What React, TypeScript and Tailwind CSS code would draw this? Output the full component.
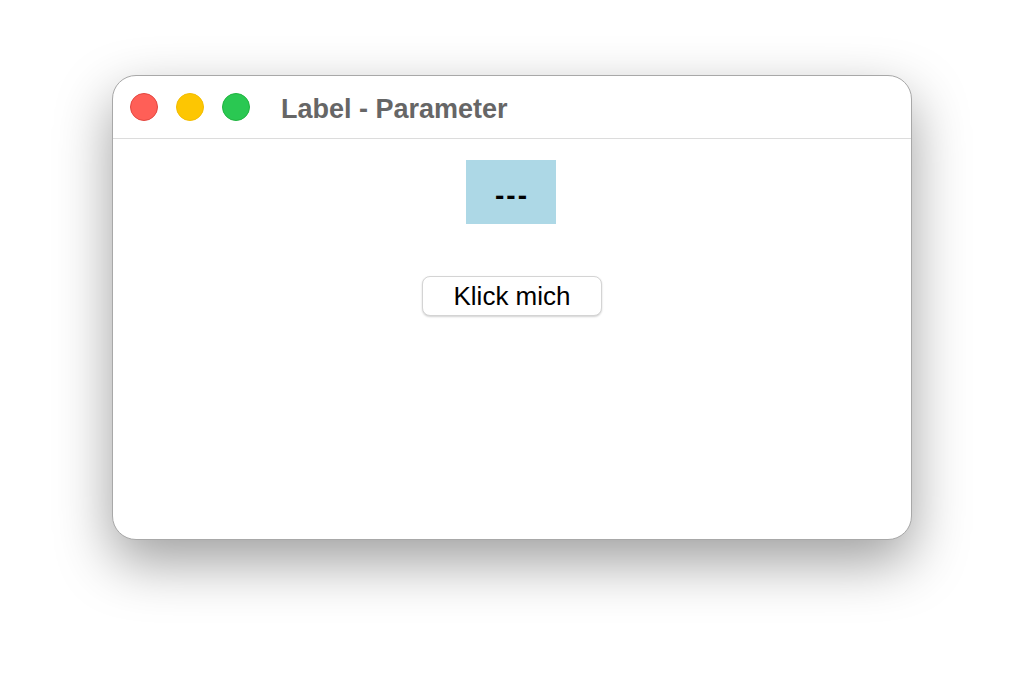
import React from "react";

export default function App() {
  return (
    <div className="w-[1024px] h-[688px] bg-white pt-[75px] pl-[112px]" style={{ fontFamily: '"Liberation Sans", Arial, sans-serif' }}>
      <div className="w-[800px] h-[465px] bg-white rounded-[24px] border border-[#a8a8a8] shadow-[0_22px_55px_rgba(0,0,0,0.38)] overflow-hidden flex flex-col">
        <div className="h-[63px] flex items-center border-b border-[#dcdcdc] shrink-0">
          <div className="flex items-center gap-[18px] pl-[17px]">
            <div className="w-[28px] h-[28px] rounded-full bg-[#ff5f57] border border-[#e2463f]" />
            <div className="w-[28px] h-[28px] rounded-full bg-[#fdc602] border border-[#f2bc00]" />
            <div className="w-[28px] h-[28px] rounded-full bg-[#2ac852] border border-[#1fb43f]" />
          </div>
          <div className="ml-[31px] text-[27px] font-bold text-[#666666] leading-none pt-[5px]">Label - Parameter</div>
        </div>
        <div className="flex flex-col items-center pt-[21px]">
          <div className="w-[90px] h-[64px] mr-[2px] bg-[#add8e6] flex items-center justify-center text-[28px] font-bold text-black tracking-[2px] pt-[8px] pl-[2px]">---</div>
          <button className="mt-[52px] w-[180px] h-[40px] rounded-[8px] bg-white border border-[#d4d4d4] shadow-[0_1px_2px_rgba(0,0,0,0.18)] text-[26px] text-black flex items-center justify-center leading-none">Klick mich</button>
        </div>
      </div>
    </div>
  );
}
